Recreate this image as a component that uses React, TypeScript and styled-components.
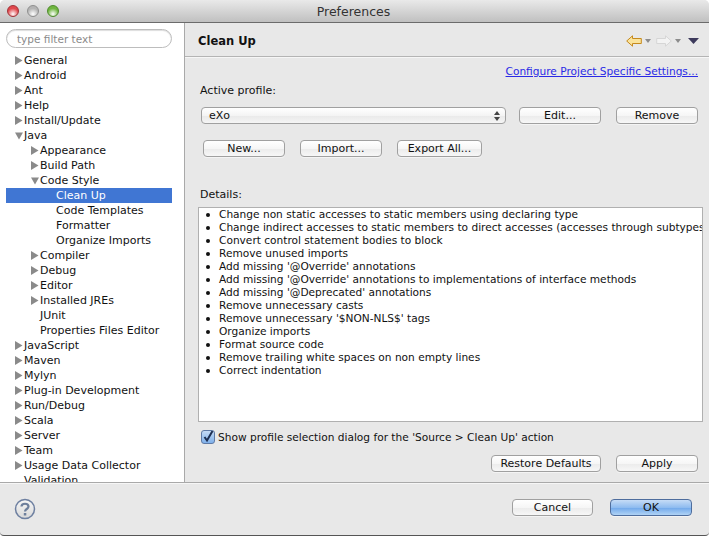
import React from 'react'
import styled, { createGlobalStyle } from 'styled-components'

const GlobalStyle = createGlobalStyle`
  html, body {
    margin: 0;
    padding: 0;
    background: #fff;
  }
  * {
    box-sizing: border-box;
  }
`

const Window = styled.div`
  width: 709px;
  height: 536px;
  display: flex;
  flex-direction: column;
  overflow: hidden;
  background: #e8e8e8;
  border-radius: 5px 5px 4px 4px;
  border-bottom: 1px solid #555;
  font-family: 'DejaVu Sans', sans-serif;
  font-size: 11px;
  color: #111;
`

const TitleBar = styled.div`
  position: relative;
  flex: none;
  height: 23px;
  display: flex;
  align-items: center;
  justify-content: center;
  padding: 1px 2px 0 0;
  background: linear-gradient(#e9e9e9, #c0c0c0);
  border-bottom: 1px solid #6b6b6b;
  font-size: 12.5px;
  color: #333;
`

const Lights = styled.div`
  position: absolute;
  left: 7px;
  top: 5px;
  display: flex;
  gap: 8px;
`

const Light = styled.span<{ $color: string; $edge: string }>`
  width: 12px;
  height: 12px;
  border-radius: 50%;
  border: 1px solid ${p => p.$edge};
  background: radial-gradient(circle at 50% 80%, #fff 0, ${p => p.$color} 60%);
`

const Main = styled.div`
  flex: 1;
  min-height: 0;
  display: flex;
`

const Sidebar = styled.div`
  flex: none;
  width: 185px;
  background: #fff;
  border-right: 1px solid #a9a9a9;
  display: flex;
  flex-direction: column;
  overflow: hidden;
  padding: 6px 12px 0 6px;
`

const Filter = styled.div`
  flex: none;
  height: 19px;
  border: 1px solid #bdbdbd;
  border-radius: 10px;
  box-shadow: inset 0 1px 1px #ddd;
  padding: 1px 10px 0;
  line-height: 17px;
  font-size: 10.5px;
  color: #8a8a8a;
  margin-bottom: 5px;
`

const Row = styled.div<{ $level: number; $selected?: boolean }>`
  flex: none;
  height: 15px;
  line-height: 15px;
  display: flex;
  align-items: center;
  white-space: nowrap;
  padding-left: ${p => 9 + p.$level * 16}px;
  background: ${p => (p.$selected ? '#4076d3' : 'transparent')};
  color: ${p => (p.$selected ? '#fff' : '#111')};
`

const ArrowSlot = styled.span`
  flex: none;
  width: 9px;
  display: flex;
`

const Content = styled.div`
  flex: 1;
  min-width: 0;
  display: flex;
  flex-direction: column;
`

const Header = styled.div`
  flex: none;
  height: 34px;
  display: flex;
  align-items: center;
  justify-content: space-between;
  padding: 2px 10px 0 13px;
  border-bottom: 1px solid #b4b4b4;
  box-shadow: 0 1px 0 #f6f6f6;
`

const HeaderTitle = styled.div`
  font-weight: bold;
  font-size: 11.5px;
  color: #111;
`

const HeaderTools = styled.div`
  display: flex;
  align-items: center;
  margin-left: -1px;
`

const Body = styled.div`
  flex: 1;
  min-height: 0;
  display: flex;
  flex-direction: column;
  padding: 7px 6px 0 13px;
`

const LinkRow = styled.div`
  height: 14px;
  line-height: 14px;
  padding-right: 5px;
  text-align: right;
  font-size: 10.6px;
  color: #2a2ae6;
  text-decoration: underline;
`

const Label = styled.div<{ $top: number; $left: number }>`
  height: 14px;
  line-height: 14px;
  margin-top: ${p => p.$top}px;
  margin-left: ${p => p.$left}px;
`

const ProfileRow = styled.div`
  display: flex;
  margin-top: 9px;
  margin-left: 3px;
  padding-right: 5px;
`

const Select = styled.div`
  width: 305px;
  height: 17px;
  margin-right: 13px;
  display: flex;
  align-items: center;
  justify-content: space-between;
  padding: 0 5px 0 7px;
  border: 1px solid #a0a0a0;
  border-radius: 4px;
  background: linear-gradient(#fff 0%, #f4f4f4 50%, #e9e9e9 51%, #f5f5f5 100%);
`

const Button = styled.div<{ $width: number; $primary?: boolean; $gap?: number }>`
  flex: none;
  width: ${p => p.$width}px;
  height: 17px;
  margin-left: ${p => p.$gap ?? 0}px;
  display: flex;
  align-items: center;
  justify-content: center;
  border: 1px solid ${p => (p.$primary ? '#4e6d9d' : '#a0a0a0')};
  border-radius: 4px;
  background: ${p =>
    p.$primary
      ? 'linear-gradient(#c6dcf6 0%, #8fbcf0 50%, #6fa7ea 51%, #b0d3f5 100%)'
      : 'linear-gradient(#fff 0%, #f6f6f6 50%, #ebebeb 51%, #f7f7f7 100%)'};
  box-shadow: 0 1px 0 #f4f4f4;
`

const ButtonRow = styled.div`
  display: flex;
  margin-top: 16px;
  margin-left: 5px;
`

const DetailsBox = styled.ul`
  flex: none;
  width: 505px;
  height: 215px;
  margin: 5px 0 0;
  padding: 0 0 0 20px;
  background: #fff;
  border: 1px solid #b0b0b0;
  overflow: hidden;
  list-style: none;
`

const DetailItem = styled.li`
  position: relative;
  height: 13px;
  line-height: 13px;
  font-size: 10.6px;
  white-space: nowrap;

  &::before {
    content: '';
    position: absolute;
    left: -13px;
    top: 5px;
    width: 4px;
    height: 4px;
    border-radius: 50%;
    background: #111;
  }
`

const CheckRow = styled.div`
  display: flex;
  align-items: center;
  height: 15px;
  margin-top: 7px;
  margin-left: 3px;
  gap: 3px;
  font-size: 10.6px;
`

const CheckBox = styled.span`
  width: 14px;
  height: 14px;
  display: flex;
  border: 1px solid #5f7aa5;
  border-radius: 3px;
  background: linear-gradient(#c5dbf5, #7fb0ea);
`

const ActionRow = styled.div`
  display: flex;
  justify-content: flex-end;
  margin-top: 11px;
  padding-right: 5px;
`

const Footer = styled.div`
  flex: none;
  height: 53px;
  display: flex;
  align-items: flex-start;
  border-top: 1px solid #a9a9a9;
  box-shadow: inset 0 1px 0 #f6f6f6;
  padding: 15px 17px 0 14px;
`

const FooterButtons = styled.div`
  margin-left: auto;
  display: flex;
  margin-top: 1px;
`

const Arrow = ({ open }: { open?: boolean }) => (
  <svg width="8" height="9" viewBox="0 0 8 9">
    <path d={open ? 'M0 1.5h8L4 8.5z' : 'M0 0l7.500 4.500L0 9z'} fill="#8a8a8a" />
  </svg>
)

const tree: { label: string; level: number; arrow?: 'closed' | 'open'; selected?: boolean }[] = [
  { label: 'General', level: 0, arrow: 'closed' },
  { label: 'Android', level: 0, arrow: 'closed' },
  { label: 'Ant', level: 0, arrow: 'closed' },
  { label: 'Help', level: 0, arrow: 'closed' },
  { label: 'Install/Update', level: 0, arrow: 'closed' },
  { label: 'Java', level: 0, arrow: 'open' },
  { label: 'Appearance', level: 1, arrow: 'closed' },
  { label: 'Build Path', level: 1, arrow: 'closed' },
  { label: 'Code Style', level: 1, arrow: 'open' },
  { label: 'Clean Up', level: 2, selected: true },
  { label: 'Code Templates', level: 2 },
  { label: 'Formatter', level: 2 },
  { label: 'Organize Imports', level: 2 },
  { label: 'Compiler', level: 1, arrow: 'closed' },
  { label: 'Debug', level: 1, arrow: 'closed' },
  { label: 'Editor', level: 1, arrow: 'closed' },
  { label: 'Installed JREs', level: 1, arrow: 'closed' },
  { label: 'JUnit', level: 1 },
  { label: 'Properties Files Editor', level: 1 },
  { label: 'JavaScript', level: 0, arrow: 'closed' },
  { label: 'Maven', level: 0, arrow: 'closed' },
  { label: 'Mylyn', level: 0, arrow: 'closed' },
  { label: 'Plug-in Development', level: 0, arrow: 'closed' },
  { label: 'Run/Debug', level: 0, arrow: 'closed' },
  { label: 'Scala', level: 0, arrow: 'closed' },
  { label: 'Server', level: 0, arrow: 'closed' },
  { label: 'Team', level: 0, arrow: 'closed' },
  { label: 'Usage Data Collector', level: 0, arrow: 'closed' },
  { label: 'Validation', level: 0 }
]

const details = [
  'Change non static accesses to static members using declaring type',
  'Change indirect accesses to static members to direct accesses (accesses through subtypes)',
  'Convert control statement bodies to block',
  'Remove unused imports',
  "Add missing '@Override' annotations",
  "Add missing '@Override' annotations to implementations of interface methods",
  "Add missing '@Deprecated' annotations",
  'Remove unnecessary casts',
  "Remove unnecessary '$NON-NLS$' tags",
  'Organize imports',
  'Format source code',
  'Remove trailing white spaces on non empty lines',
  'Correct indentation'
]

const App = () => (
  <>
    <GlobalStyle />
    <Window>
      <TitleBar>
        <Lights>
          <Light $color="#e0474c" $edge="#a03035" />
          <Light $color="#b4b4b4" $edge="#8e8e8e" />
          <Light $color="#6fb53f" $edge="#4d8a2a" />
        </Lights>
        Preferences
      </TitleBar>
      <Main>
        <Sidebar>
          <Filter>type filter text</Filter>
          {tree.map(item => (
            <Row key={item.label} $level={item.level} $selected={item.selected}>
              <ArrowSlot>{item.arrow && <Arrow open={item.arrow === 'open'} />}</ArrowSlot>
              {item.label}
            </Row>
          ))}
        </Sidebar>
        <Content>
          <Header>
            <HeaderTitle>Clean Up</HeaderTitle>
            <HeaderTools>
              <svg width="16" height="12" viewBox="0 0 16 12">
                <path d="M.7 6L6.500.8v2.700h8.800v5H6.500v2.700z" fill="#fbe39a" stroke="#c58a1e" />
              </svg>
              <svg width="14" height="6" viewBox="0 0 14 6">
                <path d="M3 1h6L6 5z" fill="#8c8c8c" />
              </svg>
              <svg width="16" height="12" viewBox="0 0 16 12">
                <path d="M15.300 6L9.500.8v2.700H.7v5h8.800v2.700z" fill="#f3f3f3" stroke="#d6d6d6" />
              </svg>
              <svg width="16" height="6" viewBox="0 0 16 6">
                <path d="M3 1h6L6 5z" fill="#8c8c8c" />
              </svg>
              <svg width="11" height="6" viewBox="0 0 11 6">
                <path d="M0 0h11L5.500 6z" fill="#3d3a5c" />
              </svg>
            </HeaderTools>
          </Header>
          <Body>
            <LinkRow>Configure Project Specific Settings...</LinkRow>
            <Label $top={6} $left={2}>Active profile:</Label>
            <ProfileRow>
              <Select>
                eXo
                <svg width="6" height="10" viewBox="0 0 6 10">
                  <path d="M3 0l3 4H0zM3 10L0 6h6z" fill="#444" />
                </svg>
              </Select>
              <Button $width={82}>Edit...</Button>
              <Button $width={82} $gap={15}>Remove</Button>
            </ProfileRow>
            <ButtonRow>
              <Button $width={82}>New...</Button>
              <Button $width={82} $gap={15}>Import...</Button>
              <Button $width={85} $gap={15}>Export All...</Button>
            </ButtonRow>
            <Label $top={31} $left={2}>Details:</Label>
            <DetailsBox>
              {details.map(text => (
                <DetailItem key={text}>{text}</DetailItem>
              ))}
            </DetailsBox>
            <CheckRow>
              <CheckBox>
                <svg width="12" height="12" viewBox="0 0 12 12">
                  <path d="M2.500 6l2.500 3.500L10.500 0" fill="none" stroke="#1d2f52" strokeWidth="2" />
                </svg>
              </CheckBox>
              Show profile selection dialog for the 'Source &gt; Clean Up' action
            </CheckRow>
            <ActionRow>
              <Button $width={110}>Restore Defaults</Button>
              <Button $width={82} $gap={15}>Apply</Button>
            </ActionRow>
          </Body>
        </Content>
      </Main>
      <Footer>
        <svg width="22" height="22" viewBox="0 0 22 22">
          <defs>
            <linearGradient id="helpFill" x1="0" y1="0" x2="0" y2="1">
              <stop offset="0" stopColor="#f7f7f7" />
              <stop offset="1" stopColor="#d8d8d8" />
            </linearGradient>
          </defs>
          <circle cx="11" cy="11" r="9.500" fill="url(#helpFill)" stroke="#6d7fa0" strokeWidth="1.500" />
          <path d="M7.500 8.500C7.500 4.800 14.500 4.800 14.500 8.500c0 2.500-3.500 2.500-3.500 5" fill="none" stroke="#6d7f9c" strokeWidth="2.200" />
          <rect x="9.800" y="15" width="2.500" height="2.500" fill="#6d7f9c" />
        </svg>
        <FooterButtons>
          <Button $width={81}>Cancel</Button>
          <Button $width={82} $gap={17} $primary>OK</Button>
        </FooterButtons>
      </Footer>
    </Window>
  </>
)

export default App
